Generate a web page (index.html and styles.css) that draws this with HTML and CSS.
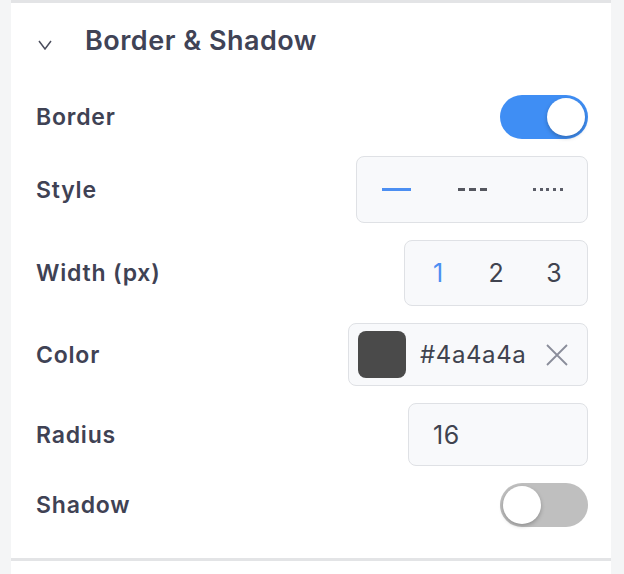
FILE: index.html
```html
<!DOCTYPE html>
<html>
<head>
<meta charset="utf-8">
<link rel="stylesheet" href="styles.css">
</head>
<body>
<div class="panel">
  <div class="section">
    <div class="header">
      <svg class="chevron" width="14" height="10" viewBox="0 0 14 10"><path d="M1 1 L7 9 L13 1" fill="none" stroke="#4a4d5c" stroke-width="1.5"/></svg>
      <span class="title">Border &amp; Shadow</span>
    </div>
    <div class="rows">
      <div class="row row-toggle">
        <span class="label">Border</span>
        <div class="toggle on"><span class="knob"></span></div>
      </div>
      <div class="row row-style">
        <span class="label">Style</span>
        <div class="seg seg-style">
          <div class="cell"><span class="line solid"></span></div>
          <div class="cell"><span class="line dashed"></span></div>
          <div class="cell"><span class="line dotted"></span></div>
        </div>
      </div>
      <div class="row row-width">
        <span class="label">Width (px)</span>
        <div class="seg seg-width">
          <div class="cell num active">1</div>
          <div class="cell num">2</div>
          <div class="cell num">3</div>
        </div>
      </div>
      <div class="row row-color">
        <span class="label">Color</span>
        <div class="colorbox">
          <span class="swatch"></span>
          <span class="hex">#4a4a4a</span>
          <svg class="clear" width="24" height="24" viewBox="0 0 24 24"><path d="M2 2 L22 22 M22 2 L2 22" stroke="#8a8d9a" stroke-width="1.8" fill="none"/></svg>
        </div>
      </div>
      <div class="row row-radius">
        <span class="label">Radius</span>
        <div class="inputbox">16</div>
      </div>
      <div class="row row-toggle">
        <span class="label">Shadow</span>
        <div class="toggle off"><span class="knob"></span></div>
      </div>
    </div>
  </div>
</div>
</body>
</html>
```

FILE: styles.css
```css
html, body {
  margin: 0;
  padding: 0;
  background: #f4f5f6;
  font-family: Inter, "Noto Sans", sans-serif;
}
.panel {
  margin-left: 11px;
  width: 600px;
  height: 571px;
  background: #fff;
  border-top: 3px solid #e3e4e6;
}
.section {
  height: 555px;
  border-bottom: 3px solid #e3e4e6;
}
.header {
  height: 76px;
  display: flex;
  align-items: center;
  padding-left: 27px;
}
.chevron {
  margin-top: 8px;
}
.title {
  margin-left: 33px;
  font-size: 27px;
  font-weight: 600;
  letter-spacing: 0.5px;
  color: #404356;
  margin-top: -2px;
}
.rows {
  padding: 16px 23px 0 25px;
  display: flex;
  flex-direction: column;
  gap: 17px;
}
.row {
  display: flex;
  align-items: center;
  justify-content: space-between;
}
.label {
  font-size: 23px;
  font-weight: 600;
  letter-spacing: 0.8px;
  color: #3f4254;
}
.toggle {
  width: 88px;
  height: 44px;
  border-radius: 22px;
  position: relative;
  box-sizing: border-box;
}
.toggle.on { background: #3f8ef4; }
.toggle.off { background: #bfbfbf; }
.knob {
  position: absolute;
  top: 3px;
  width: 38px;
  height: 38px;
  border-radius: 50%;
  background: #fff;
  box-shadow: 0 2px 4px rgba(0,0,0,0.25);
}
.toggle.on .knob { right: 3px; }
.toggle.off .knob { left: 3px; }
.seg {
  display: flex;
  border: 1.5px solid #dfe1e5;
  background: #f8f9fb;
  border-radius: 8px;
  box-sizing: border-box;
}
.seg-style {
  width: 232px;
  height: 67px;
  padding: 0 1px;
}
.seg-style .cell {
  flex: 1;
  display: flex;
  align-items: center;
  justify-content: center;
}
.line {
  display: block;
  width: 29px;
  height: 3px;
}
.line.solid { background: #4c8ff2; }
.line.dashed {
  background: repeating-linear-gradient(90deg, #55575f 0 7px, transparent 7px 11px);
}
.line.dotted {
  width: 30px;
  background: repeating-linear-gradient(90deg, #5c5e68 0 3px, transparent 3px 6.7px);
}
.seg-width {
  width: 184px;
  height: 66px;
  padding: 0 4px;
}
.seg-width .cell {
  flex: 1;
  display: flex;
  align-items: center;
  justify-content: center;
  font-size: 25px;
  color: #40434f;
}
.seg-width .cell.active { color: #4c8ff2; }
.colorbox {
  width: 240px;
  height: 63px;
  border: 1.5px solid #dfe1e5;
  background: #f8f9fb;
  border-radius: 8px;
  box-sizing: border-box;
  display: flex;
  align-items: center;
  padding-left: 9px;
}
.swatch {
  width: 48px;
  height: 47px;
  background: #4a4a4a;
  border-radius: 8px;
}
.hex {
  margin-left: 14px;
  font-size: 24px;
  letter-spacing: 0.6px;
  color: #40434f;
}
.clear {
  margin-left: 19px;
}
.inputbox {
  width: 180px;
  height: 63px;
  border: 1.5px solid #dfe1e5;
  background: #f8f9fb;
  border-radius: 8px;
  box-sizing: border-box;
  display: flex;
  align-items: center;
  padding-left: 24px;
  font-size: 25px;
  letter-spacing: 0.5px;
  color: #40434f;
}
```
